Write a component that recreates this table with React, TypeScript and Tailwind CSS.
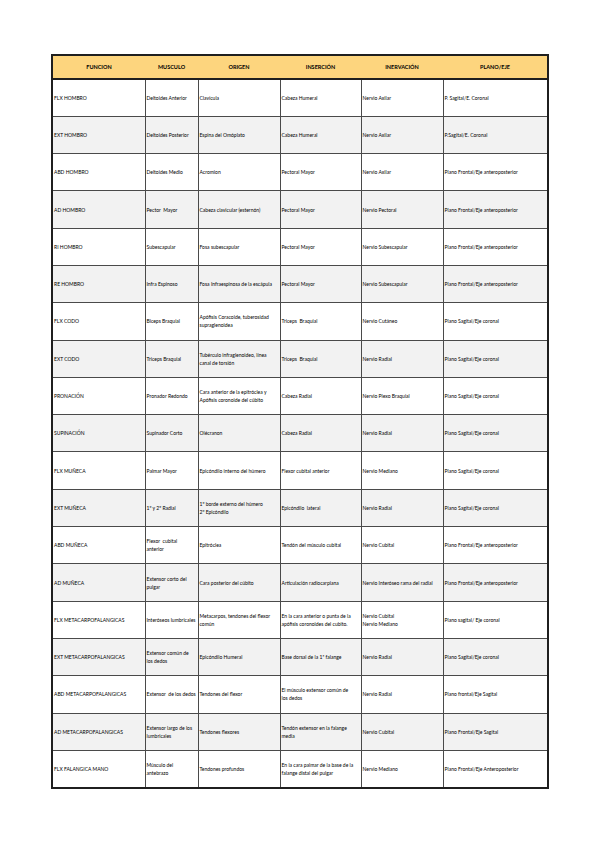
import React from "react";

type Row = [string, string, string, string, string, string];

const headers = ["FUNCION", "MUSCULO", "ORIGEN", "INSERCIÓN", "INERVACIÓN", "PLANO/EJE"];

const widths = ["w-[93px]", "w-[53px]", "w-[82px]", "w-[81px]", "w-[82px]", "w-[105px]"];

const rows: Row[] = [
  ["FLX HOMBRO", "Deltoides Anterior", "Clavícula", "Cabeza Humeral", "Nervio Axilar", "P. Sagital/E. Coronal"],
  ["EXT HOMBRO", "Deltoides Posterior", "Espina del Omóplato", "Cabeza Humeral", "Nervio Axilar", "P.Sagital/E. Coronal"],
  ["ABD HOMBRO", "Deltoides Medio", "Acromion", "Pectoral Mayor", "Nervio Axilar", "Plano Frontal/Eje anteroposterior"],
  ["AD HOMBRO", "Pector  Mayor", "Cabeza clavicular (esternón)", "Pectoral Mayor", "Nervio Pectoral", "Plano Frontal/Eje anteroposterior"],
  ["RI HOMBRO", "Subescapular", "Fosa subescapular", "Pectoral Mayor", "Nervio Subescapular", "Plano Frontal/Eje anteroposterior"],
  ["RE HOMBRO", "Infra Espinoso", "Fosa Infraespinosa de la escápula", "Pectoral Mayor", "Nervio Subescapular", "Plano Frontal/Eje anteroposterior"],
  ["FLX CODO", "Biceps Braquial", "Apófisis Coracoide, tuberosidad\nsupraglenoidea", "Triceps  Braquial", "Nervio Cutáneo", "Plano Sagital/Eje coronal"],
  ["EXT CODO", "Triceps Braquial", "Tubérculo infraglenoideo, línea\ncanal de torsión", "Triceps  Braquial", "Nervio Radial", "Plano Sagital/Eje coronal"],
  ["PRONACIÓN", "Pronador Redondo", "Cara anterior de la epitróclea y\nApófisis coronoide del cúbito", "Cabeza Radial", "Nervio Plexo Braquial", "Plano Sagital/Eje coronal"],
  ["SUPINACIÓN", "Supinador Corto", "Olécranon", "Cabeza Radial", "Nervio Radial", "Plano Sagital/Eje coronal"],
  ["FLX MUÑECA", "Palmar Mayor", "Epicóndilo interno del húmero", "Flexor cubital anterior", "Nervio Mediano", "Plano Sagital/Eje coronal"],
  ["EXT MUÑECA", "1º y 2º Radial", "1º borde externo del húmero\n2º Epicóndilo", "Epicóndilo  lateral", "Nervio Radial", "Plano Sagital/Eje coronal"],
  ["ABD MUÑECA", "Flexor  cubital\nanterior", "Epitróclea", "Tendón del músculo cubital", "Nervio Cubital", "Plano Frontal/Eje anteroposterior"],
  ["AD MUÑECA", "Extensor corto del\npulgar", "Cara posterior del cúbito", "Articulación radiocarpiana", "Nervio Interóseo rama del radial", "Plano Frontal/Eje anteroposterior"],
  ["FLX METACARPOFALANGICAS", "Interóseos lumbricales", "Metacarpos, tendones del flexor\ncomún", "En la cara anterior o punta de la\napófisis coronoides del cubito.", "Nervio Cubital\nNervio Mediano", "Plano sagital/ Eje coronal"],
  ["EXT METACARPOFALANGICAS", "Extensor común de\nlos dedos", "Epicóndilo Humeral", "Base dorsal de la 1ª falange", "Nervio Radial", "Plano Sagital/Eje coronal"],
  ["ABD METACARPOFALANGICAS", "Extensor  de los dedos", "Tendones del flexor", "El músculo extensor común de\nlos dedos", "Nervio Radial", "Plano frontal/Eje Sagital"],
  ["AD METACARPOFALANGICAS", "Extensor largo de los\nlumbricales", "Tendones flexores", "Tendón extensor en la falange\nmedia", "Nervio Cubital", "Plano Frontal/Eje Sagital"],
  ["FLX FALANGICA MANO", "Músculo del\nantebrazo", "Tendones profundos", "En la cara palmar de la base de la\nfalange distal del pulgar", "Nervio Mediano", "Plano Frontal/Eje Anteroposterior"],
];

export default function App() {
  return (
    <div className="w-[599px] h-[848px] bg-white pt-[54px] pl-[51px] font-['Lato','Liberation_Sans',sans-serif] text-black">
      <table className="border-collapse border-2 border-[#1f1f1f] table-fixed">
        <thead>
          <tr className="h-[24px] bg-[#fdd57e] border-b-2 border-[#1f1f1f]">
            {headers.map((h, i) => (
              <th key={h} className={`${widths[i]} text-[5.5px] font-bold text-center align-middle p-0`}>
                {h}
              </th>
            ))}
          </tr>
        </thead>
        <tbody>
          {rows.map((row, r) => (
            <tr key={r} className={`h-[37.3px] ${r % 2 === 1 ? "bg-[#f2f2f2]" : "bg-white"}`}>
              {row.map((cell, c) => (
                <td
                  key={c}
                  className={`${widths[c]} border border-[#4a4a4a] text-[5px] leading-[8px] align-middle pl-[1px] pr-[1px] whitespace-pre-wrap`}
                >
                  {cell}
                </td>
              ))}
            </tr>
          ))}
        </tbody>
      </table>
    </div>
  );
}
